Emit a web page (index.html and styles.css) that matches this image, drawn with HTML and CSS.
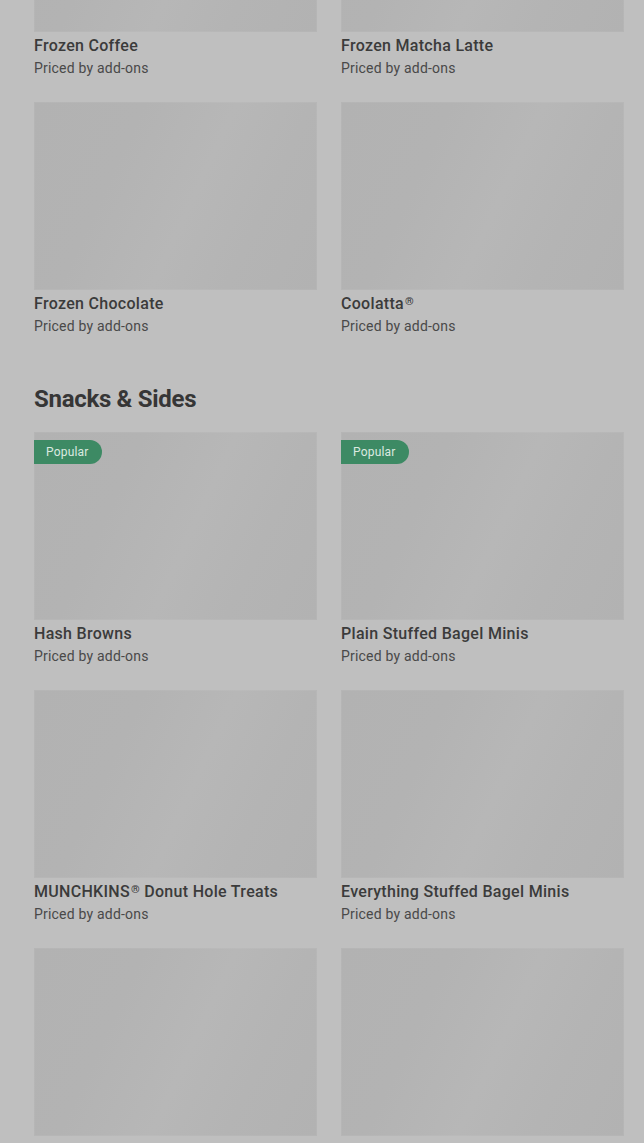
FILE: index.html
```html
<!DOCTYPE html>
<html lang="en">
<head>
<meta charset="utf-8">
<title>Menu</title>
<link rel="stylesheet" href="styles.css">
</head>
<body>
<main class="page">
  <section class="section section-scrolled">
    <div class="grid">
      <article class="card">
        <div class="thumb"></div>
        <h3 class="title">Frozen Coffee</h3>
        <p class="sub">Priced by add-ons</p>
      </article>
      <article class="card">
        <div class="thumb"></div>
        <h3 class="title">Frozen Matcha Latte</h3>
        <p class="sub">Priced by add-ons</p>
      </article>
      <article class="card">
        <div class="thumb"></div>
        <h3 class="title">Frozen Chocolate</h3>
        <p class="sub">Priced by add-ons</p>
      </article>
      <article class="card">
        <div class="thumb"></div>
        <h3 class="title">Coolatta<span class="reg">®</span></h3>
        <p class="sub">Priced by add-ons</p>
      </article>
    </div>
  </section>

  <section class="section">
    <h2 class="heading">Snacks &amp; Sides</h2>
    <div class="grid">
      <article class="card">
        <div class="thumb"><span class="badge">Popular</span></div>
        <h3 class="title">Hash Browns</h3>
        <p class="sub">Priced by add-ons</p>
      </article>
      <article class="card">
        <div class="thumb"><span class="badge">Popular</span></div>
        <h3 class="title">Plain Stuffed Bagel Minis</h3>
        <p class="sub">Priced by add-ons</p>
      </article>
      <article class="card">
        <div class="thumb"></div>
        <h3 class="title">MUNCHKINS<span class="reg">®</span> Donut Hole Treats</h3>
        <p class="sub">Priced by add-ons</p>
      </article>
      <article class="card">
        <div class="thumb"></div>
        <h3 class="title">Everything Stuffed Bagel Minis</h3>
        <p class="sub">Priced by add-ons</p>
      </article>
      <article class="card">
        <div class="thumb"></div>
        <h3 class="title">Sweet Potato Seasoned Fries</h3>
        <p class="sub">Priced by add-ons</p>
      </article>
      <article class="card">
        <div class="thumb"></div>
        <h3 class="title">Avocado Toast Sourdough</h3>
        <p class="sub">Priced by add-ons</p>
      </article>
    </div>
  </section>
</main>
</body>
</html>
```

FILE: styles.css
```css
* { box-sizing: border-box; }

html, body {
  margin: 0;
  padding: 0;
  background: #bfbfbf;
  height: 100%;
  overflow: hidden;
}

body {
  font-family: Roboto, "Liberation Sans", Arial, sans-serif;
  color: #3a3a3a;
}

.page {
  padding: 0 20px 0 34px;
}

.section-scrolled {
  margin-top: -156px;
}

.grid {
  display: grid;
  grid-template-columns: 283px 283px;
  column-gap: 24px;
  row-gap: 24px;
}

.card {
  display: flex;
  flex-direction: column;
}

.thumb {
  position: relative;
  height: 188px;
  background: linear-gradient(115deg, #b2b2b2 0%, #b3b3b3 30%, #b7b7b7 55%, #b4b4b4 75%, #b2b2b2 100%);
  box-shadow: inset 0 0 0 1px rgba(255,255,255,0.05);
}

.badge {
  position: absolute;
  top: 8px;
  left: 0;
  height: 24px;
  padding: 0 13px 0 12px;
  display: flex;
  align-items: center;
  background: #3d8a64;
  color: #dbe9e0;
  font-size: 12px;
  letter-spacing: 0.2px;
  border-radius: 0 12px 12px 0;
}

.title {
  margin: 4px 0 0;
  font-size: 16px;
  line-height: 20px;
  font-weight: 500;
  letter-spacing: 0.3px;
  color: #3b3b3b;
}

.reg {
  font-size: 11px;
  vertical-align: 4px;
  line-height: 0;
  margin-left: 1px;
}

.sub {
  margin: 2px 0 0;
  font-size: 14px;
  line-height: 20px;
  font-weight: 400;
  letter-spacing: 0.2px;
  color: #494949;
}

.heading {
  margin: 47px 0 17px;
  font-size: 24px;
  line-height: 32px;
  font-weight: 700;
  letter-spacing: -0.3px;
  color: #363636;
}
```
